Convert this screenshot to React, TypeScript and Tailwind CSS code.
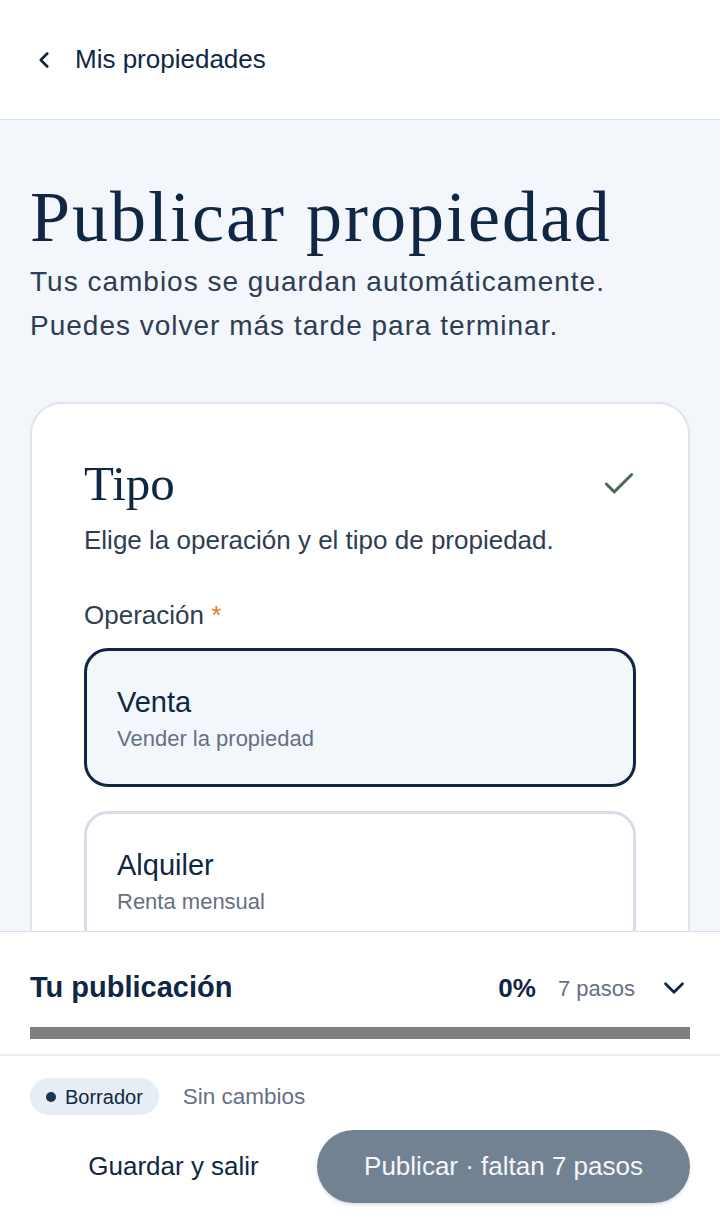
import React from 'react';
import { ChevronLeft, ChevronDown, Check } from 'lucide-react';

const options = [
  { id: 'venta', title: 'Venta', sub: 'Vender la propiedad' },
  { id: 'alquiler', title: 'Alquiler', sub: 'Renta mensual' },
];

export default function App() {
  const [selected, setSelected] = React.useState('venta');

  return (
    <div className="h-[1226px] flex flex-col overflow-hidden bg-[#f3f6fa] font-['Liberation_Sans',sans-serif] text-[#0f2744]">
      {/* Header */}
      <header className="h-[120px] shrink-0 bg-white border-b border-[#d9e0ea] flex items-center px-[31px]">
        <ChevronLeft className="w-[26px] h-[26px] text-[#0f2744]" strokeWidth={2.4} />
        <span className="ml-[18px] text-[26px] text-[#0f2744]">Mis propiedades</span>
      </header>

      {/* Content */}
      <main className="flex-1 overflow-hidden px-[30px] pt-[61px]">
        <h1 className="font-['Liberation_Serif',serif] text-[72px] leading-[72px] tracking-[2px] text-[#0f2744]">
          Publicar propiedad
        </h1>
        <p className="mt-[7px] text-[28px] leading-[44px] tracking-[1px] text-[#2e3d52]">
          Tus cambios se guardan automáticamente.
          <br />
          Puedes volver más tarde para terminar.
        </p>

        <section className="mt-[54px] bg-white border-2 border-[#e0e5ed] rounded-[32px] px-[52px] pt-[52px] pb-[60px]">
          <div className="flex items-center justify-between">
            <h2 className="font-['Liberation_Serif',serif] text-[49px] leading-[56px] text-[#0f2744]">Tipo</h2>
            <Check className="w-[38px] h-[38px] -mr-[2px] text-[#4d6b57]" strokeWidth={1.9} />
          </div>
          <p className="mt-[10px] text-[26px] leading-[36px] text-[#2e3d52]">
            Elige la operación y el tipo de propiedad.
          </p>

          <div className="mt-[39px] text-[26px] leading-[36px] text-[#2e3d52]">
            Operación <span className="text-[#ea7a1c]">*</span>
          </div>

          <div className="mt-[15px] flex flex-col gap-[24px]">
            {options.map((o) => (
              <button
                key={o.id}
                onClick={() => setSelected(o.id)}
                className={`text-left rounded-[24px] border-[3px] px-[30px] pt-[33px] pb-[30px] ${
                  selected === o.id
                    ? 'border-[#0f2744] bg-[#f3f6fa]'
                    : 'border-[#d7dde6] bg-white'
                }`}
              >
                <div className="text-[29px] leading-[36px] text-[#0f2744]">{o.title}</div>
                <div className="mt-[4px] text-[22px] leading-[30px] text-[#647184]">{o.sub}</div>
              </button>
            ))}
          </div>
        </section>
      </main>

      {/* Bottom sheet */}
      <footer className="shrink-0 bg-white border-t border-[#d9e0ea]">
        <div className="px-[30px] pt-[38px] pb-[15px] border-b-2 border-[#ededed]">
          <div className="flex items-center h-[36px]">
            <span className="flex-1 text-[29px] font-bold text-[#0f2744]">Tu publicación</span>
            <span className="text-[26px] font-bold text-[#0f2744]">0%</span>
            <span className="ml-[22px] text-[22px] text-[#647184]">7 pasos</span>
            <ChevronDown className="ml-[22px] -mr-[1px] w-[34px] h-[34px] text-[#0f2744]" strokeWidth={1.9} />
          </div>
          <div className="mt-[21px] h-[12px] bg-[#808080]" />
        </div>

        <div className="px-[30px] pt-[22px] pb-[23px]">
          <div className="flex items-center">
            <span className="inline-flex items-center h-[37px] px-[16px] rounded-full bg-[#e6edf5] text-[20px] text-[#0f2744]">
              <span className="w-[10px] h-[10px] rounded-full bg-[#1c3550] mr-[9px]" />
              Borrador
            </span>
            <span className="ml-[24px] text-[22.5px] text-[#647184]">Sin cambios</span>
          </div>

          <div className="mt-[15px] flex items-center">
            <button className="flex-1 h-[73px] text-[26px] text-[#0f2744] text-center">Guardar y salir</button>
            <button className="h-[73px] px-[47px] rounded-full bg-[#738293] text-[26px] text-[#f5f7fa] shadow-[0_2px_3px_rgba(15,39,68,0.15)]">
              Publicar · faltan 7 pasos
            </button>
          </div>
        </div>
      </footer>
    </div>
  );
}
